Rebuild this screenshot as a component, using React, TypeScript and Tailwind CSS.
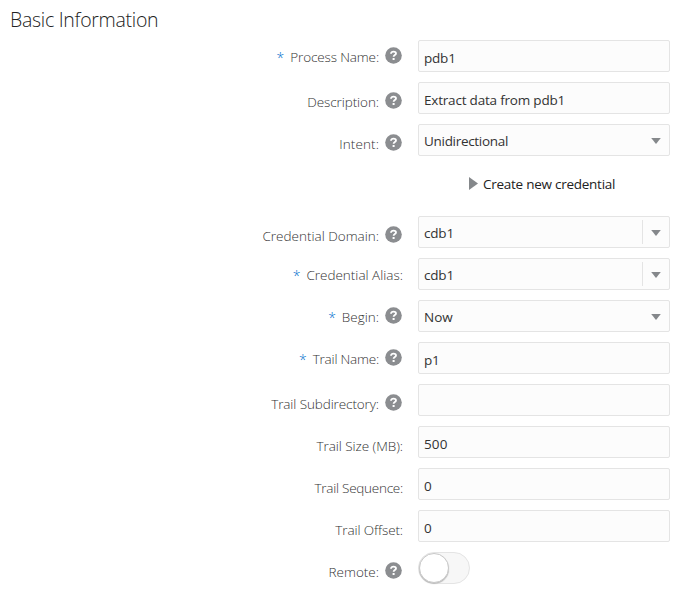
import type { ReactNode } from "react";

function HelpIcon() {
  return (
    <svg className="h-[17px] w-[17px] shrink-0" viewBox="0 0 17 17" aria-hidden="true">
      <circle cx="8.5" cy="8.5" r="8.3" fill="#8b8d90" />
      <path d="M6 6.7C6 5.4 7 4.7 8.5 4.7S11 5.4 11 6.5C11 8.1 8.6 8 8.6 9.8" fill="none" stroke="#fff" strokeWidth="1.8" />
      <rect x="7.6" y="11" width="2" height="2" fill="#fff" />
    </svg>
  );
}

function Arrow() {
  return (
    <svg className="mt-[2px] h-[6px] w-[10px]" viewBox="0 0 10 6" aria-hidden="true">
      <path d="M0.2 0H9.8L5 6Z" fill="#85888b" />
    </svg>
  );
}

type RowProps = { label: string; track?: string; required?: boolean; help?: boolean; children: ReactNode };

function Row({ label, track = "", required, help, children }: RowProps) {
  return (
    <div className="flex h-8 items-start">
      <div className={`flex w-[403px] items-start justify-end ${required ? "pt-[1px]" : "pt-1"}`}>
        {required && <span className="mr-[6px] text-sm leading-[34px] font-light text-[#0572ce]">*</span>}
        <span className={`whitespace-nowrap text-[13.5px] leading-[32px] font-light text-[#333] ${track}`}>{label}</span>
        {help && (
          <span className="mr-px ml-[6px] pt-[6px]">
            <HelpIcon />
          </span>
        )}
      </div>
      <div className="ml-[15px]">{children}</div>
    </div>
  );
}

type FieldProps = { value?: string; track?: string; kind?: "input" | "select" | "combo" };

function Field({ value = "", track = "tracking-[-0.2px]", kind = "input" }: FieldProps) {
  return (
    <div className="flex h-8 w-[252px] rounded-[2px] border border-[#e4e4e4] bg-[#fcfcfc]">
      <span className={`flex-1 whitespace-nowrap pl-[5px] text-[13.5px] text-[#333] ${kind === "input" ? "leading-[34px]" : "leading-[32px]"} ${track}`}>{value}</span>
      {kind !== "input" && (
        <span className={`my-[3px] flex items-center justify-center ${kind === "combo" ? "w-[27px] border-l border-[#e4e4e4]" : "w-[26px]"}`}>
          <Arrow />
        </span>
      )}
    </div>
  );
}

export default function App() {
  return (
    <main className="h-[597px] w-[684px] overflow-hidden bg-white font-['Open_Sans','Noto_Sans',sans-serif]">
      <h1 className="h-10 pl-[10px] text-[19.5px] leading-[39px] font-light tracking-[-0.28px] text-[#222]">Basic Information</h1>
      <div className="flex flex-col gap-[10px]">
        <Row label="Process Name:" track="tracking-[-0.13px]" required help><Field value="pdb1" /></Row>
        <Row label="Description:" track="tracking-[-0.07px]" help><Field value="Extract data from pdb1" /></Row>
        <Row label="Intent:" track="tracking-[0.1px]" help><Field value="Unidirectional" track="tracking-[-0.3px]" kind="select" /></Row>
        <div className="flex h-10 items-start pt-[11px] pl-[469px]">
          <svg className="h-[13px] w-[9px]" viewBox="0 0 9 13" aria-hidden="true">
            <path d="M0 0L9 6.5L0 13Z" fill="#85888b" />
          </svg>
          <span className="ml-[5px] text-[13.5px] leading-[14px] tracking-[-0.26px] whitespace-nowrap text-[#222]">Create new credential</span>
        </div>
        <Row label="Credential Domain:" help><Field value="cdb1" kind="combo" /></Row>
        <Row label="Credential Alias:" required><Field value="cdb1" kind="combo" /></Row>
        <Row label="Begin:" required help><Field value="Now" track="tracking-normal" kind="select" /></Row>
        <Row label="Trail Name:" track="tracking-[-0.2px]" required help><Field value="p1" /></Row>
        <Row label="Trail Subdirectory:" track="tracking-[-0.1px]" help><Field /></Row>
        <Row label="Trail Size (MB):" track="tracking-[-0.05px]"><Field value="500" track="tracking-[0.1px]" /></Row>
        <Row label="Trail Sequence:" track="tracking-[-0.25px]"><Field value="0" /></Row>
        <Row label="Trail Offset:" track="tracking-[-0.1px]"><Field value="0" /></Row>
        <Row label="Remote:" help>
          <div className="flex h-8 w-[52px] items-center rounded-full border border-[#e4e4e4] bg-[#f7f7f7]">
            <div className="h-[30px] w-[30px] rounded-full border border-[#c8c8c8] bg-white shadow-[0_1px_1px_#bbb]" />
          </div>
        </Row>
      </div>
    </main>
  );
}
